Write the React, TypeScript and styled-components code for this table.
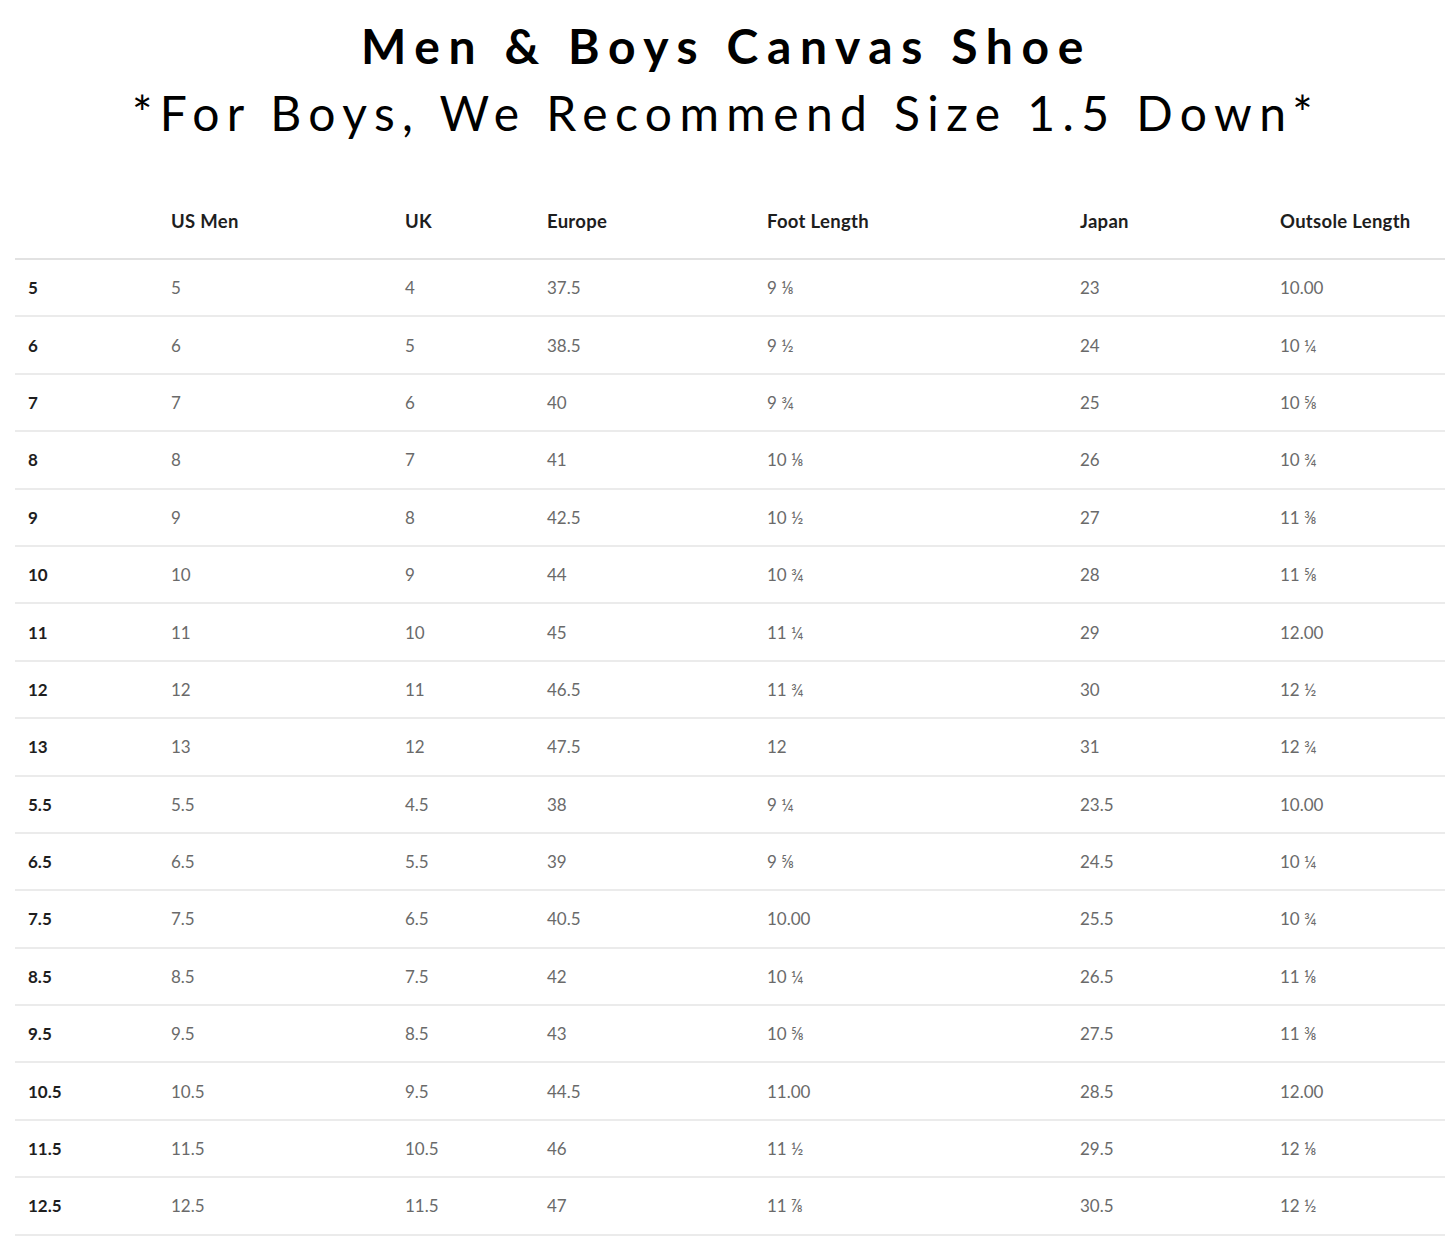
import styled, { createGlobalStyle } from "styled-components";

const GlobalStyle = createGlobalStyle`
  html, body {
    margin: 0;
    padding: 0;
    background: #fff;
  }
`;

const COLS = "143px 234px 142px 220px 313px 200px 1fr";

const headers = ["", "US Men", "UK", "Europe", "Foot Length", "Japan", "Outsole Length"];

const rows: string[][] = [
  ["5", "5", "4", "37.5", "9 ⅛", "23", "10.00"],
  ["6", "6", "5", "38.5", "9 ½", "24", "10 ¼"],
  ["7", "7", "6", "40", "9 ¾", "25", "10 ⅝"],
  ["8", "8", "7", "41", "10 ⅛", "26", "10 ¾"],
  ["9", "9", "8", "42.5", "10 ½", "27", "11 ⅜"],
  ["10", "10", "9", "44", "10 ¾", "28", "11 ⅝"],
  ["11", "11", "10", "45", "11 ¼", "29", "12.00"],
  ["12", "12", "11", "46.5", "11 ¾", "30", "12 ½"],
  ["13", "13", "12", "47.5", "12", "31", "12 ¾"],
  ["5.5", "5.5", "4.5", "38", "9 ¼", "23.5", "10.00"],
  ["6.5", "6.5", "5.5", "39", "9 ⅝", "24.5", "10 ¼"],
  ["7.5", "7.5", "6.5", "40.5", "10.00", "25.5", "10 ¾"],
  ["8.5", "8.5", "7.5", "42", "10 ¼", "26.5", "11 ⅛"],
  ["9.5", "9.5", "8.5", "43", "10 ⅝", "27.5", "11 ⅜"],
  ["10.5", "10.5", "9.5", "44.5", "11.00", "28.5", "12.00"],
  ["11.5", "11.5", "10.5", "46", "11 ½", "29.5", "12 ⅛"],
  ["12.5", "12.5", "11.5", "47", "11 ⅞", "30.5", "12 ½"],
];

export default function App() {
  return (
    <Page>
      <GlobalStyle />
      <Heading>
        <Title>Men &amp; Boys Canvas Shoe</Title>
        <Subtitle>*For Boys, We Recommend Size 1.5 Down*</Subtitle>
      </Heading>
      <Table>
        <HeadRow>
          {headers.map((h, i) => (
            <HeadCell key={i}>{h}</HeadCell>
          ))}
        </HeadRow>
        {rows.map((r, i) => (
          <Row key={i}>
            {r.map((c, j) => (
              <Cell key={j} first={j === 0}>
                {c}
              </Cell>
            ))}
          </Row>
        ))}
      </Table>
    </Page>
  );
}

const Page = styled.div`
  width: 1445px;
  background: #fff;
`;

const Heading = styled.div`
  display: flex;
  flex-direction: column;
  align-items: center;
  padding-top: 13px;
  font-family: "Lato", "Inter", sans-serif;
  color: #000;
`;

const Title = styled.h1`
  margin: 0;
  font-size: 48px;
  line-height: 66px;
  font-weight: 700;
  letter-spacing: 8.6px;
  padding-left: 8px;
`;

const Subtitle = styled.h2`
  margin: 1px 0 0;
  font-size: 48px;
  line-height: 66px;
  font-weight: 400;
  letter-spacing: 7.4px;
  padding-left: 7px;
`;

const Table = styled.div`
  margin: 38px 0 0 15px;
  font-family: "Lato", "Inter", sans-serif;
`;

const HeadRow = styled.div`
  display: grid;
  grid-template-columns: ${COLS};
  height: 74px;
  align-items: center;
  border-bottom: 2px solid #e2e2e2;
`;

const HeadCell = styled.div`
  padding-left: 13px;
  font-size: 18.5px;
  font-weight: 700;
  letter-spacing: 0.3px;
  color: #1e1e1e;
`;

const Row = styled.div`
  display: grid;
  grid-template-columns: ${COLS};
  height: 55.4px;
  align-items: center;
  border-bottom: 2px solid #ebebeb;
`;

const Cell = styled.div<{ first: boolean }>`
  padding-left: 13px;
  font-size: 17px;
  font-weight: ${(p) => (p.first ? 700 : 400)};
  color: ${(p) => (p.first ? "#1e1e1e" : "#6a6a6a")};
`;
